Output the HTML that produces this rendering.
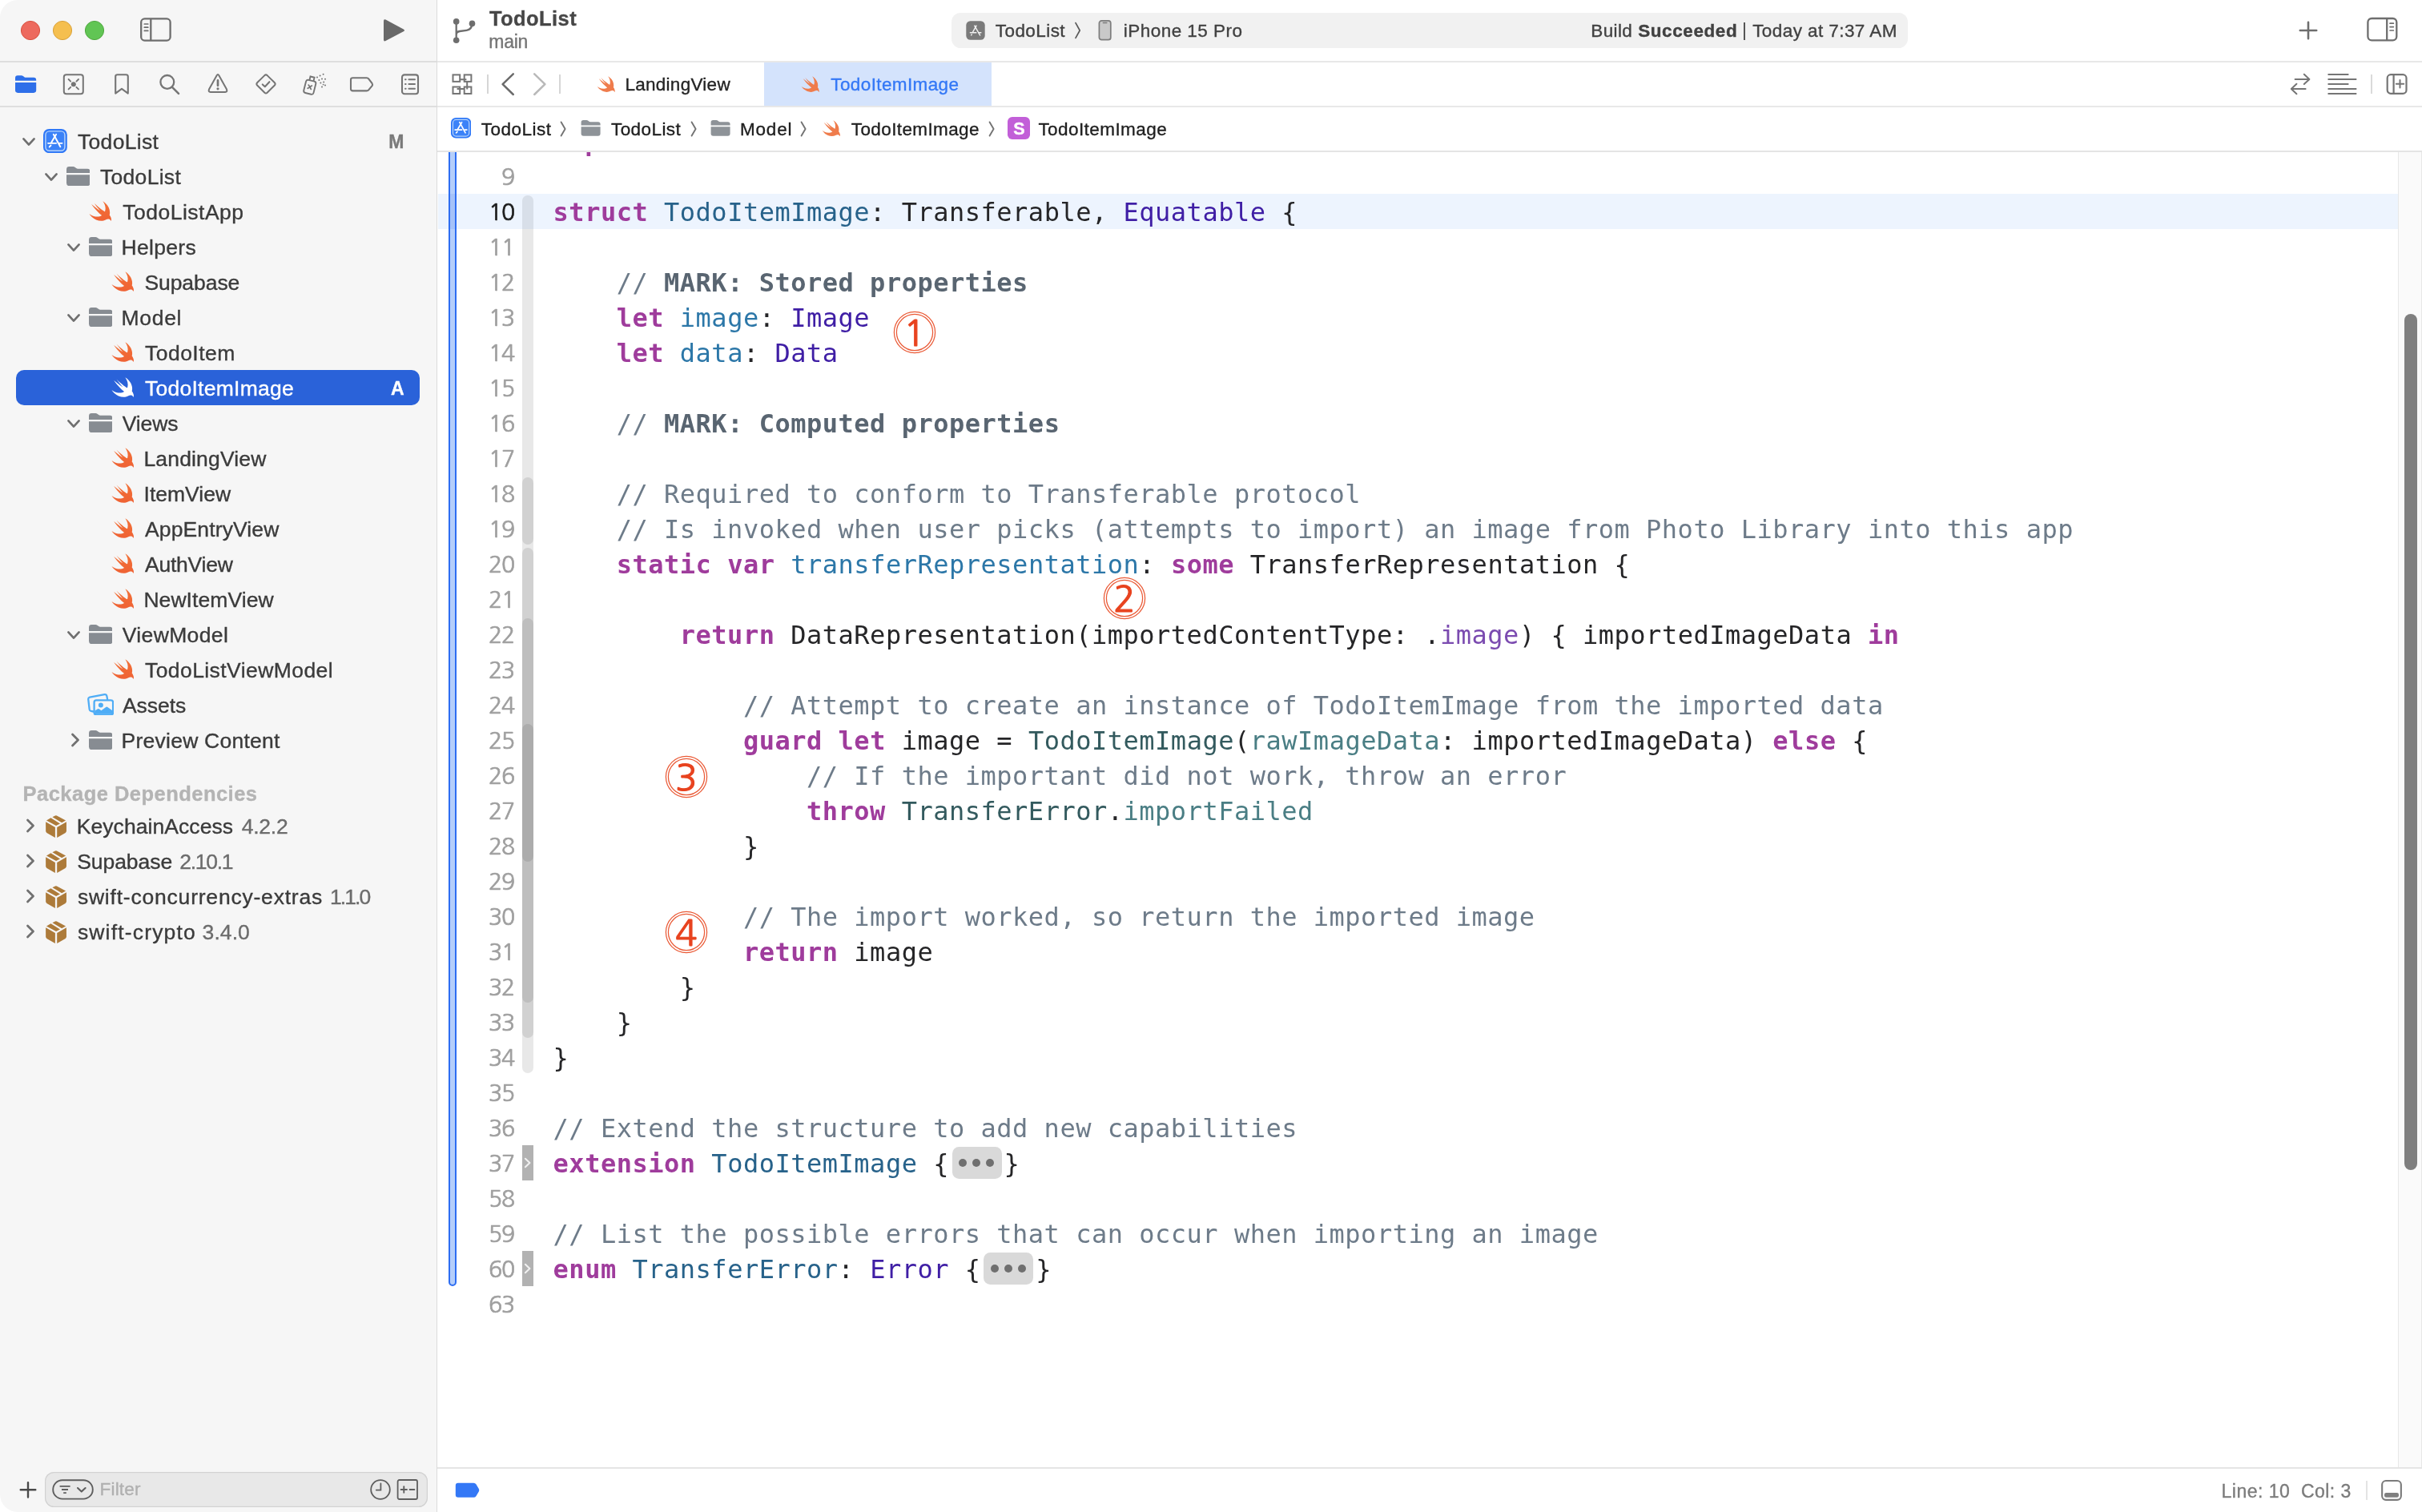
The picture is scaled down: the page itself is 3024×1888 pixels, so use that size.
<!DOCTYPE html>
<html lang="en"><head><meta charset="utf-8"><title>TodoList — TodoItemImage.swift</title>
<style>
html,body{margin:0;padding:0;background:#fff;}
body{width:3024px;height:1888px;position:relative;overflow:hidden;font-family:"Liberation Sans", sans-serif;}
.win{position:absolute;left:0;top:0;width:3024px;height:1888px;overflow:hidden;will-change:transform;}
.b{position:absolute;display:block;}
.t{position:absolute;white-space:pre;line-height:1;-webkit-text-stroke:0.35px currentColor;}

.ed{position:absolute;left:547px;top:190px;width:2477px;height:1641.8px;overflow:hidden;background:#fff;}
.ln{position:absolute;left:143.60px;margin-top:1.2px;height:44.0px;line-height:44.0px;white-space:pre;font-family:"DejaVu Sans Mono", "Liberation Mono", monospace;font-size:32px;letter-spacing:0.5094px;color:#252527;}
.ln b{font-weight:700;}
.no{position:absolute;left:0;width:94.9px;text-align:right;height:44.0px;line-height:44.0px;margin-top:1.2px;font-family:NanumGothic,"Liberation Sans", sans-serif;font-size:28.4px;letter-spacing:-1.2px;color:#9f9f9f;-webkit-text-stroke:0.7px currentColor;}
.fold{display:inline-block;vertical-align:top;position:relative;top:0.6px;width:62.2px;height:40.2px;margin:0 2.8px 0 3.6px;border-radius:8.5px;background:#d9d9d9;letter-spacing:0;}
.fold i{position:absolute;top:14.9px;width:10px;height:10px;border-radius:50%;background:#6f6f6f;}

</style></head><body><div class="win">
<div class="b" style="left:0px;top:0px;width:545.2px;height:1888px;background:#f6f6f6;border-radius:22px 0 0 22px;"></div>
<div class="b" style="left:544.9px;top:0px;width:1.3px;height:1888px;background:#dbdbdb;"></div>
<div class="b" style="left:0px;top:76.2px;width:544.9px;height:1.9px;background:#dedede;"></div>
<div class="b" style="left:0px;top:132.3px;width:544.9px;height:1.9px;background:#dedede;"></div>
<div class="b" style="left:546.1px;top:76.2px;width:2478px;height:1.9px;background:#e8e8e8;"></div>
<div class="b" style="left:546.1px;top:132.1px;width:2478px;height:1.9px;background:#e8e8e8;"></div>
<div class="b" style="left:546.1px;top:188.2px;width:2478px;height:1.9px;background:#e4e4e4;"></div>
<div class="b" style="left:546.1px;top:1832px;width:2478px;height:2px;background:#e5e5e5;"></div>
<svg class="b" style="left:25px;top:25px;" width="26" height="26" viewBox="0 0 26 26"><circle cx="13" cy="13" r="11.6" fill="#ed6a5e" stroke="#d8513f" stroke-width="1"/></svg>
<svg class="b" style="left:65px;top:25px;" width="26" height="26" viewBox="0 0 26 26"><circle cx="13" cy="13" r="11.6" fill="#f5bf4f" stroke="#d9a13a" stroke-width="1"/></svg>
<svg class="b" style="left:105px;top:25px;" width="26" height="26" viewBox="0 0 26 26"><circle cx="13" cy="13" r="11.6" fill="#61c554" stroke="#4fa73f" stroke-width="1"/></svg>
<svg class="b" style="left:173px;top:20px;" width="44" height="34" viewBox="0 0 44 34"><rect x="3.2" y="3.4" width="36.4" height="27.2" rx="4.4" fill="none" stroke="#6e6e6e" stroke-width="2.3"/><path d="M15.3 3.4 V30.6" stroke="#6e6e6e" stroke-width="2.3"/><path d="M7.3 10 H11.8 M7.3 14.2 H11.8 M7.3 18.4 H11.8" stroke="#6e6e6e" stroke-width="1.7" stroke-linecap="round"/></svg>
<svg class="b" style="left:476px;top:22px;" width="32" height="32" viewBox="0 0 32 32"><path d="M3 4.2 Q3 1.4 5.5 2.6 L27.8 14.4 Q30.2 15.85 27.8 17.3 L5.5 29.1 Q3 30.3 3 27.5 Z" fill="#696969"/></svg>
<svg class="b" style="left:19px;top:93px;" width="27" height="24" viewBox="0 0 27 24"><path fill="#2e6fe9" d="M0 4.4 Q0 1.2 3 1.2 H7.6 Q9 1.2 10.2 2.2 L11.4 3.2 Q12.2 3.8 13.4 3.8 H23 Q26.2 3.8 26.2 7 V7.8 H0 Z"/><path fill="#2e6fe9" d="M0 9.9 H26.2 V19.6 Q26.2 22.9 23 22.9 H3.2 Q0 22.9 0 19.6 Z"/></svg>
<svg class="b" style="left:77px;top:91px;" width="30" height="28" viewBox="0 0 30 28"><rect x="2.8" y="2.2" width="24" height="24" rx="3" fill="none" stroke="#757575" stroke-width="2"/><circle cx="14.8" cy="14.2" r="3" fill="#757575"/><path d="M8.6 8 L11.2 10.6 M21 8 L18.4 10.6 M8.6 20.4 L11.2 17.8 M21 20.4 L18.4 17.8" stroke="#757575" stroke-width="1.9" stroke-linecap="round"/></svg>
<svg class="b" style="left:141px;top:91px;" width="22" height="28" viewBox="0 0 22 28"><path d="M3.2 4.6 Q3.2 2.2 5.6 2.2 H16.4 Q18.8 2.2 18.8 4.6 V25.6 L11 19.8 L3.2 25.6 Z" fill="none" stroke="#757575" stroke-width="2.1" stroke-linejoin="round"/></svg>
<svg class="b" style="left:198px;top:91px;" width="28" height="28" viewBox="0 0 28 28"><circle cx="10.8" cy="11.4" r="8.4" fill="none" stroke="#757575" stroke-width="2.3"/><path d="M17 17.8 L25 25.8" stroke="#757575" stroke-width="2.6" stroke-linecap="round"/></svg>
<svg class="b" style="left:258px;top:91px;" width="28" height="27" viewBox="0 0 28 27"><path d="M12.6 3.2 Q14 1 15.4 3.2 L25 20.6 Q26.2 23.8 23.2 24 H4.8 Q1.8 23.8 3 20.6 Z" fill="none" stroke="#757575" stroke-width="2" stroke-linejoin="round"/><path d="M14 9.4 V15.8" stroke="#757575" stroke-width="2.7" stroke-linecap="round"/><circle cx="14" cy="19.8" r="1.6" fill="#757575"/></svg>
<svg class="b" style="left:316px;top:90px;" width="31" height="30" viewBox="0 0 31 30"><path d="M14.4 4.1 Q16 2.6 17.6 4.1 L26.9 13.3 Q28.4 14.9 26.9 16.5 L17.6 25.7 Q16 27.2 14.4 25.7 L5.1 16.5 Q3.6 14.9 5.1 13.3 Z" fill="none" stroke="#757575" stroke-width="2"/><path d="M11.8 15.4 L14.8 18.2 L20.4 12.2" fill="none" stroke="#757575" stroke-width="2.1" stroke-linecap="round" stroke-linejoin="round"/></svg>
<svg class="b" style="left:375px;top:89px;" width="34" height="32" viewBox="0 0 34 32"><g transform="translate(1.2 0.4) rotate(14 11 19)"><rect x="4.4" y="11.2" width="12.6" height="16.6" rx="2.6" fill="none" stroke="#757575" stroke-width="1.9"/><path d="M8.2 11 V6.4 H13.4 V11" fill="none" stroke="#757575" stroke-width="1.9"/><path d="M8.6 17.2 L12.8 21.6 M12.8 17.2 L8.6 21.6" stroke="#757575" stroke-width="1.8" stroke-linecap="round"/></g><g fill="#757575"><circle cx="21" cy="7.6" r="1"/><circle cx="24.6" cy="5.6" r="1"/><circle cx="28.6" cy="3.8" r="1"/><circle cx="23.4" cy="11" r="1"/><circle cx="27" cy="9.6" r="1"/><circle cx="31" cy="9.8" r="1"/><circle cx="25.4" cy="14.4" r="1"/><circle cx="29.2" cy="13.4" r="1"/><circle cx="27" cy="19.6" r="1"/><circle cx="31" cy="17.4" r="1"/><circle cx="28.6" cy="16.6" r="0.9"/></g></svg>
<svg class="b" style="left:435px;top:94px;" width="34" height="22" viewBox="0 0 34 22"><path d="M5.4 3.2 H22.8 Q24.4 3.2 25.2 4.4 L29.6 10.2 Q30.6 11.8 29.6 13.2 L25.2 18.4 Q24.4 19.4 22.8 19.4 H5.4 Q3 19.4 3 17 V5.6 Q3 3.2 5.4 3.2 Z" fill="none" stroke="#757575" stroke-width="2.1"/></svg>
<svg class="b" style="left:499px;top:91px;" width="26" height="28" viewBox="0 0 26 28"><rect x="3" y="2.4" width="20" height="23.8" rx="3" fill="none" stroke="#757575" stroke-width="2.1"/><path d="M11.4 8.2 H19 M11.4 14 H19 M11.4 19.8 H19" stroke="#757575" stroke-width="1.9" stroke-linecap="round"/><path d="M7 8.2 H7.7 M7 14 H7.7 M7 19.8 H7.7" stroke="#757575" stroke-width="1.9" stroke-linecap="round"/></svg>
<svg class="b" style="left:562px;top:20px;" width="36" height="36" viewBox="0 0 36 36"><circle cx="7.7" cy="6.9" r="3.8" fill="#6e6e6e"/><circle cx="7.7" cy="30.2" r="3.8" fill="#6e6e6e"/><circle cx="27.5" cy="9.4" r="3.8" fill="#6e6e6e"/><path d="M7.7 6.9 V30.2 M7.7 23.4 Q7.7 19.6 12 19 L20.6 17.8 Q27.3 16.8 27.5 9.4" fill="none" stroke="#6e6e6e" stroke-width="2.3"/></svg>
<div class="t " style="left:611.00px;top:11px;font-size:25.5px;color:#474747;font-weight:700;letter-spacing:0.421px;">TodoList</div>
<div class="t " style="left:610.30px;top:41px;font-size:23px;color:#757575;letter-spacing:-0.254px;">main</div>
<div class="b" style="left:1188px;top:15.8px;width:1193.8px;height:44.5px;background:#f1f1f1;border-radius:11.5px;"></div>
<svg class="b" style="left:1206px;top:26px;" width="24" height="24" viewBox="0 0 24 24"><rect x="0.3" y="0.3" width="23.4" height="23.4" rx="5.2" fill="#7a7a7a"/><g stroke="#f1f1f1" stroke-width="1.5" stroke-linecap="round" fill="none"><path d="M13 6.2 L8.6 14"/><path d="M10.8 6.2 L17.6 18"/><path d="M5.4 14.8 H12.8"/><path d="M15.8 14.8 H18.8"/><path d="M7.2 17 L6.7 17.9"/></g></svg>
<div class="t " style="left:1242.80px;top:28px;font-size:22.5px;color:#414141;letter-spacing:0.421px;">TodoList</div>
<svg class="b" style="left:1340px;top:27px;" width="12" height="22" viewBox="0 0 12 22"><path d="M3 1.6 L8.2 11 L3 20.4" fill="none" stroke="#5a5a5a" stroke-width="1.7" stroke-linecap="round" stroke-linejoin="round"/></svg>
<svg class="b" style="left:1370px;top:24px;" width="20" height="28" viewBox="0 0 20 28"><rect x="2.4" y="1.9" width="14.4" height="23.8" rx="3" fill="#c9c9c9" stroke="#7d7d7d" stroke-width="1.7"/><path d="M7.4 4.6 H11.8" stroke="#7d7d7d" stroke-width="1.5" stroke-linecap="round"/></svg>
<div class="t " style="left:1402.80px;top:28px;font-size:22.5px;color:#414141;letter-spacing:0.459px;">iPhone 15 Pro</div>
<div class="t " style="left:1986.30px;top:28px;font-size:22.5px;color:#414141;letter-spacing:0.370px;">Build</div>
<div class="t " style="left:2045.20px;top:28px;font-size:22.5px;color:#414141;font-weight:700;letter-spacing:0.580px;">Succeeded</div>
<div class="b" style="left:2176.8px;top:27.5px;width:1.8px;height:22px;background:#555;"></div>
<div class="t " style="left:2188.20px;top:28px;font-size:22.5px;color:#414141;letter-spacing:0.423px;">Today at 7:37 AM</div>
<svg class="b" style="left:2869px;top:24.8px;" width="26" height="26" viewBox="0 0 26 26"><path d="M13 2.8 V23.2 M2.8 13 H23.2" stroke="#6e6e6e" stroke-width="2.6" stroke-linecap="round"/></svg>
<svg class="b" style="left:2952.8px;top:20.2px;" width="44" height="34" viewBox="0 0 44 34"><rect x="3.4" y="3" width="35.9" height="27.4" rx="4.8" fill="none" stroke="#6e6e6e" stroke-width="2.3"/><path d="M27.2 3 V30.4" stroke="#6e6e6e" stroke-width="2.3"/><path d="M31 9.2 H35.4 M31 13.6 H35.4 M31 18 H35.4" stroke="#6e6e6e" stroke-width="1.7" stroke-linecap="round"/></svg>
<svg class="b" style="left:562px;top:90px;" width="30" height="30" viewBox="0 0 30 30"><g fill="none" stroke="#757575" stroke-width="2"><rect x="3.5" y="3.4" width="8.7" height="8.5"/><rect x="17.7" y="3.4" width="8.7" height="8.5"/><rect x="3.5" y="18.5" width="8.7" height="8.5"/><rect x="17.7" y="18.5" width="8.7" height="8.5"/><path d="M12.2 9.2 H20.4 M21.2 11.9 V21.4 M17.7 21 H8.6"/></g></svg>
<div class="b" style="left:608.4px;top:93px;width:1.6px;height:24px;background:#d6d6d6;"></div>
<div class="b" style="left:698px;top:93px;width:1.6px;height:24px;background:#d6d6d6;"></div>
<svg class="b" style="left:622px;top:89px;" width="24" height="32" viewBox="0 0 24 32"><path d="M18.8 3.4 L5.6 16.2 L18.8 29" fill="none" stroke="#6b6b6b" stroke-width="2.5" stroke-linecap="round" stroke-linejoin="round"/></svg>
<svg class="b" style="left:662px;top:89px;" width="24" height="32" viewBox="0 0 24 32"><path d="M5.2 3.4 L18.4 16.2 L5.2 29" fill="none" stroke="#b9b9b9" stroke-width="2.5" stroke-linecap="round" stroke-linejoin="round"/></svg>
<svg class="b" style="left:745.2px;top:95.2px;overflow:visible;" width="24.2" height="20.8" viewBox="2.3 3.3 19.1 17"><path fill="#ef7c4c" d="M13.543 3.41c4.114 2.47 6.545 7.162 5.549 11.131-.024.093-.05.181-.076.272l.002.001c2.062 2.538 1.5 5.258 1.236 4.745-1.072-2.086-3.066-1.568-4.088-1.043a6.803 6.803 0 0 1-.281.158l-.02.012-.002.002c-2.115 1.123-4.957 1.205-7.812-.022a12.568 12.568 0 0 1-5.64-4.838c.649.48 1.35.902 2.097 1.252 3.019 1.414 6.051 1.311 8.197-.002C9.651 12.73 7.101 9.67 5.146 7.191a10.628 10.628 0 0 1-1.005-1.384c2.34 2.142 6.038 4.83 7.365 5.576C8.69 8.408 6.208 4.743 6.324 4.86c4.436 4.47 8.528 6.996 8.528 6.996.154.085.27.154.36.213.085-.215.16-.437.224-.668.708-2.588-.09-5.548-1.893-7.992z"/></svg>
<div class="t " style="left:780.40px;top:95px;font-size:22.5px;color:#242424;letter-spacing:0.281px;">LandingView</div>
<div class="b" style="left:954px;top:78.1px;width:284px;height:54px;background:#d4e3fc;"></div>
<svg class="b" style="left:1000.2px;top:95.2px;overflow:visible;" width="24.2" height="20.8" viewBox="2.3 3.3 19.1 17"><path fill="#ef7c4c" d="M13.543 3.41c4.114 2.47 6.545 7.162 5.549 11.131-.024.093-.05.181-.076.272l.002.001c2.062 2.538 1.5 5.258 1.236 4.745-1.072-2.086-3.066-1.568-4.088-1.043a6.803 6.803 0 0 1-.281.158l-.02.012-.002.002c-2.115 1.123-4.957 1.205-7.812-.022a12.568 12.568 0 0 1-5.64-4.838c.649.48 1.35.902 2.097 1.252 3.019 1.414 6.051 1.311 8.197-.002C9.651 12.73 7.101 9.67 5.146 7.191a10.628 10.628 0 0 1-1.005-1.384c2.34 2.142 6.038 4.83 7.365 5.576C8.69 8.408 6.208 4.743 6.324 4.86c4.436 4.47 8.528 6.996 8.528 6.996.154.085.27.154.36.213.085-.215.16-.437.224-.668.708-2.588-.09-5.548-1.893-7.992z"/></svg>
<div class="t " style="left:1037.30px;top:95px;font-size:22.5px;color:#3478f6;letter-spacing:0.386px;">TodoItemImage</div>
<svg class="b" style="left:2857px;top:90px;" width="30" height="30" viewBox="0 0 30 30"><g fill="none" stroke="#757575" stroke-width="2" stroke-linecap="round" stroke-linejoin="round"><path d="M8.6 8.9 H26 M19.8 2.8 L26.4 8.9 L19.8 15"/><path d="M21.6 21 H4 M10.4 14.8 L3.8 21 L10.4 27.2"/></g></svg>
<svg class="b" style="left:2905.5px;top:91px;" width="38" height="28" viewBox="0 0 38 28"><path d="M0.5 1.9 H26.4 M0.5 7.9 H36.3 M0.5 13.9 H26.4 M0.5 20 H36.3 M0.5 26 H36.3" stroke="#757575" stroke-width="2"/></svg>
<div class="b" style="left:2960px;top:93px;width:1.6px;height:24px;background:#dadada;"></div>
<svg class="b" style="left:2977.4px;top:90px;" width="32" height="30" viewBox="0 0 32 30"><rect x="3.7" y="3.2" width="23.8" height="23.6" rx="4.3" fill="none" stroke="#757575" stroke-width="2.2"/><path d="M11.6 3.2 V26.8" stroke="#757575" stroke-width="2.2"/><path d="M14.8 14.8 H24.2 M19.5 10.1 V19.5" stroke="#757575" stroke-width="2" stroke-linecap="round"/></svg>
<svg class="b" style="left:563px;top:147.2px;" width="25.2" height="25.535999999999998" viewBox="0 0 30 30.4"><rect x="0" y="0" width="30" height="30.4" rx="7.3" fill="#2f78f7"/><rect x="2.9" y="2.9" width="24.2" height="24.6" rx="4.8" fill="#3b82f8" stroke="#b5d3fb" stroke-width="1.5"/><g stroke="#ffffff" stroke-width="2" stroke-linecap="round" fill="none"><path d="M16.2 6.8 L10.3 16.9"/><path d="M12.9 6.8 L21.5 22.4"/><path d="M6.1 18 H16.2"/><path d="M20.3 18 H23.7"/><path d="M9.5 20.7 L7.8 22.6"/></g></svg>
<div class="t " style="left:600.70px;top:151px;font-size:22.5px;color:#1f1f1f;letter-spacing:0.493px;">TodoList</div>
<svg class="b" style="left:697.8px;top:151px;" width="12" height="20" viewBox="0 0 12 20"><path d="M2.6 1.4 L7.6 10 L2.6 18.6" fill="none" stroke="#737373" stroke-width="1.9" stroke-linecap="round" stroke-linejoin="round"/></svg>
<svg class="b" style="left:725.3px;top:150.2px;" width="25.2" height="19.7" viewBox="0 0 29.5 24.2"><path fill="#8e9398" d="M0 3.4 Q0 0 3.4 0 H8.2 Q9.6 0 10.8 1 L12.2 2.1 Q13 2.7 14.2 2.7 H26 Q29.5 2.7 29.5 6.2 V8 H0 Z"/><path fill="#8e9398" d="M0 10.2 H29.5 V20.6 Q29.5 24.2 25.9 24.2 H3.6 Q0 24.2 0 20.6 Z"/></svg>
<div class="t " style="left:763.00px;top:151px;font-size:22.5px;color:#1f1f1f;letter-spacing:0.421px;">TodoList</div>
<svg class="b" style="left:861px;top:151px;" width="12" height="20" viewBox="0 0 12 20"><path d="M2.6 1.4 L7.6 10 L2.6 18.6" fill="none" stroke="#737373" stroke-width="1.9" stroke-linecap="round" stroke-linejoin="round"/></svg>
<svg class="b" style="left:886.9px;top:150.2px;" width="25.2" height="19.7" viewBox="0 0 29.5 24.2"><path fill="#8e9398" d="M0 3.4 Q0 0 3.4 0 H8.2 Q9.6 0 10.8 1 L12.2 2.1 Q13 2.7 14.2 2.7 H26 Q29.5 2.7 29.5 6.2 V8 H0 Z"/><path fill="#8e9398" d="M0 10.2 H29.5 V20.6 Q29.5 24.2 25.9 24.2 H3.6 Q0 24.2 0 20.6 Z"/></svg>
<div class="t " style="left:923.90px;top:151px;font-size:22.5px;color:#1f1f1f;letter-spacing:0.854px;">Model</div>
<svg class="b" style="left:998px;top:151px;" width="12" height="20" viewBox="0 0 12 20"><path d="M2.6 1.4 L7.6 10 L2.6 18.6" fill="none" stroke="#737373" stroke-width="1.9" stroke-linecap="round" stroke-linejoin="round"/></svg>
<svg class="b" style="left:1025.6px;top:150.2px;overflow:visible;" width="24.6" height="21" viewBox="2.3 3.3 19.1 17"><path fill="#ef7c4c" d="M13.543 3.41c4.114 2.47 6.545 7.162 5.549 11.131-.024.093-.05.181-.076.272l.002.001c2.062 2.538 1.5 5.258 1.236 4.745-1.072-2.086-3.066-1.568-4.088-1.043a6.803 6.803 0 0 1-.281.158l-.02.012-.002.002c-2.115 1.123-4.957 1.205-7.812-.022a12.568 12.568 0 0 1-5.64-4.838c.649.48 1.35.902 2.097 1.252 3.019 1.414 6.051 1.311 8.197-.002C9.651 12.73 7.101 9.67 5.146 7.191a10.628 10.628 0 0 1-1.005-1.384c2.34 2.142 6.038 4.83 7.365 5.576C8.69 8.408 6.208 4.743 6.324 4.86c4.436 4.47 8.528 6.996 8.528 6.996.154.085.27.154.36.213.085-.215.16-.437.224-.668.708-2.588-.09-5.548-1.893-7.992z"/></svg>
<div class="t " style="left:1062.80px;top:151px;font-size:22.5px;color:#1f1f1f;letter-spacing:0.386px;">TodoItemImage</div>
<svg class="b" style="left:1232.5px;top:151px;" width="12" height="20" viewBox="0 0 12 20"><path d="M2.6 1.4 L7.6 10 L2.6 18.6" fill="none" stroke="#737373" stroke-width="1.9" stroke-linecap="round" stroke-linejoin="round"/></svg>
<div class="b" style="left:1258px;top:145.8px;width:27.7px;height:28px;background:#c25fd8;border-radius:5.8px;"></div>
<div class="t " style="left:1265.20px;top:151px;font-size:21.5px;color:#ffffff;font-weight:700;">S</div>
<div class="t " style="left:1296.40px;top:151px;font-size:22.5px;color:#1f1f1f;letter-spacing:0.436px;">TodoItemImage</div>
<div class="b" style="left:20px;top:462.3px;width:504px;height:43.6px;background:#2a62d9;border-radius:10px;"></div>
<svg class="b" style="left:24.0px;top:166.8px;" width="24" height="20" viewBox="-12 -10 24 20"><path d="M-6.6 -3.6 L0 3.6 L6.6 -3.6" fill="none" stroke="#6f6f6f" stroke-width="2.7" stroke-linecap="round" stroke-linejoin="round"/></svg>
<svg class="b" style="left:54.25px;top:160.9px;" width="29.8" height="30.197333333333333" viewBox="0 0 30 30.4"><rect x="0" y="0" width="30" height="30.4" rx="7.3" fill="#2f78f7"/><rect x="2.9" y="2.9" width="24.2" height="24.6" rx="4.8" fill="#3b82f8" stroke="#b5d3fb" stroke-width="1.5"/><g stroke="#ffffff" stroke-width="2" stroke-linecap="round" fill="none"><path d="M16.2 6.8 L10.3 16.9"/><path d="M12.9 6.8 L21.5 22.4"/><path d="M6.1 18 H16.2"/><path d="M20.3 18 H23.7"/><path d="M9.5 20.7 L7.8 22.6"/></g></svg>
<div class="t " style="left:96.90px;top:164px;font-size:26.5px;color:#3b3b3b;letter-spacing:0.337px;">TodoList</div>
<svg class="b" style="left:52.0px;top:210.8px;" width="24" height="20" viewBox="-12 -10 24 20"><path d="M-6.6 -3.6 L0 3.6 L6.6 -3.6" fill="none" stroke="#6f6f6f" stroke-width="2.7" stroke-linecap="round" stroke-linejoin="round"/></svg>
<svg class="b" style="left:82.7px;top:207.9px;" width="29.5" height="24.2" viewBox="0 0 29.5 24.2"><path fill="#878c92" d="M0 3.4 Q0 0 3.4 0 H8.2 Q9.6 0 10.8 1 L12.2 2.1 Q13 2.7 14.2 2.7 H26 Q29.5 2.7 29.5 6.2 V8 H0 Z"/><path fill="#878c92" d="M0 10.2 H29.5 V20.6 Q29.5 24.2 25.9 24.2 H3.6 Q0 24.2 0 20.6 Z"/></svg>
<div class="t " style="left:125.00px;top:208px;font-size:26.5px;color:#3b3b3b;letter-spacing:0.294px;">TodoList</div>
<svg class="b" style="left:110.8px;top:250.7px;overflow:visible;" width="29.6" height="25.9" viewBox="2.3 3.3 19.1 17"><defs><linearGradient id="sg110_250" x1="0" y1="0" x2="0" y2="1"><stop offset="0" stop-color="#f27238"/><stop offset="1" stop-color="#ef6234"/></linearGradient></defs><path fill="url(#sg110_250)" d="M13.543 3.41c4.114 2.47 6.545 7.162 5.549 11.131-.024.093-.05.181-.076.272l.002.001c2.062 2.538 1.5 5.258 1.236 4.745-1.072-2.086-3.066-1.568-4.088-1.043a6.803 6.803 0 0 1-.281.158l-.02.012-.002.002c-2.115 1.123-4.957 1.205-7.812-.022a12.568 12.568 0 0 1-5.64-4.838c.649.48 1.35.902 2.097 1.252 3.019 1.414 6.051 1.311 8.197-.002C9.651 12.73 7.101 9.67 5.146 7.191a10.628 10.628 0 0 1-1.005-1.384c2.34 2.142 6.038 4.83 7.365 5.576C8.69 8.408 6.208 4.743 6.324 4.86c4.436 4.47 8.528 6.996 8.528 6.996.154.085.27.154.36.213.085-.215.16-.437.224-.668.708-2.588-.09-5.548-1.893-7.992z"/></svg>
<div class="t " style="left:153.30px;top:252px;font-size:26.5px;color:#3b3b3b;letter-spacing:0.488px;">TodoListApp</div>
<svg class="b" style="left:80.0px;top:298.8px;" width="24" height="20" viewBox="-12 -10 24 20"><path d="M-6.6 -3.6 L0 3.6 L6.6 -3.6" fill="none" stroke="#6f6f6f" stroke-width="2.7" stroke-linecap="round" stroke-linejoin="round"/></svg>
<svg class="b" style="left:110.7px;top:295.9px;" width="29.5" height="24.2" viewBox="0 0 29.5 24.2"><path fill="#878c92" d="M0 3.4 Q0 0 3.4 0 H8.2 Q9.6 0 10.8 1 L12.2 2.1 Q13 2.7 14.2 2.7 H26 Q29.5 2.7 29.5 6.2 V8 H0 Z"/><path fill="#878c92" d="M0 10.2 H29.5 V20.6 Q29.5 24.2 25.9 24.2 H3.6 Q0 24.2 0 20.6 Z"/></svg>
<div class="t " style="left:151.60px;top:296px;font-size:26.5px;color:#3b3b3b;letter-spacing:0.289px;">Helpers</div>
<svg class="b" style="left:138.8px;top:338.7px;overflow:visible;" width="29.6" height="25.9" viewBox="2.3 3.3 19.1 17"><defs><linearGradient id="sg138_338" x1="0" y1="0" x2="0" y2="1"><stop offset="0" stop-color="#f27238"/><stop offset="1" stop-color="#ef6234"/></linearGradient></defs><path fill="url(#sg138_338)" d="M13.543 3.41c4.114 2.47 6.545 7.162 5.549 11.131-.024.093-.05.181-.076.272l.002.001c2.062 2.538 1.5 5.258 1.236 4.745-1.072-2.086-3.066-1.568-4.088-1.043a6.803 6.803 0 0 1-.281.158l-.02.012-.002.002c-2.115 1.123-4.957 1.205-7.812-.022a12.568 12.568 0 0 1-5.64-4.838c.649.48 1.35.902 2.097 1.252 3.019 1.414 6.051 1.311 8.197-.002C9.651 12.73 7.101 9.67 5.146 7.191a10.628 10.628 0 0 1-1.005-1.384c2.34 2.142 6.038 4.83 7.365 5.576C8.69 8.408 6.208 4.743 6.324 4.86c4.436 4.47 8.528 6.996 8.528 6.996.154.085.27.154.36.213.085-.215.16-.437.224-.668.708-2.588-.09-5.548-1.893-7.992z"/></svg>
<div class="t " style="left:180.40px;top:340px;font-size:26.5px;color:#3b3b3b;letter-spacing:-0.059px;">Supabase</div>
<svg class="b" style="left:80.0px;top:386.8px;" width="24" height="20" viewBox="-12 -10 24 20"><path d="M-6.6 -3.6 L0 3.6 L6.6 -3.6" fill="none" stroke="#6f6f6f" stroke-width="2.7" stroke-linecap="round" stroke-linejoin="round"/></svg>
<svg class="b" style="left:110.7px;top:383.9px;" width="29.5" height="24.2" viewBox="0 0 29.5 24.2"><path fill="#878c92" d="M0 3.4 Q0 0 3.4 0 H8.2 Q9.6 0 10.8 1 L12.2 2.1 Q13 2.7 14.2 2.7 H26 Q29.5 2.7 29.5 6.2 V8 H0 Z"/><path fill="#878c92" d="M0 10.2 H29.5 V20.6 Q29.5 24.2 25.9 24.2 H3.6 Q0 24.2 0 20.6 Z"/></svg>
<div class="t " style="left:151.60px;top:384px;font-size:26.5px;color:#3b3b3b;letter-spacing:0.678px;">Model</div>
<svg class="b" style="left:138.8px;top:426.7px;overflow:visible;" width="29.6" height="25.9" viewBox="2.3 3.3 19.1 17"><defs><linearGradient id="sg138_426" x1="0" y1="0" x2="0" y2="1"><stop offset="0" stop-color="#f27238"/><stop offset="1" stop-color="#ef6234"/></linearGradient></defs><path fill="url(#sg138_426)" d="M13.543 3.41c4.114 2.47 6.545 7.162 5.549 11.131-.024.093-.05.181-.076.272l.002.001c2.062 2.538 1.5 5.258 1.236 4.745-1.072-2.086-3.066-1.568-4.088-1.043a6.803 6.803 0 0 1-.281.158l-.02.012-.002.002c-2.115 1.123-4.957 1.205-7.812-.022a12.568 12.568 0 0 1-5.64-4.838c.649.48 1.35.902 2.097 1.252 3.019 1.414 6.051 1.311 8.197-.002C9.651 12.73 7.101 9.67 5.146 7.191a10.628 10.628 0 0 1-1.005-1.384c2.34 2.142 6.038 4.83 7.365 5.576C8.69 8.408 6.208 4.743 6.324 4.86c4.436 4.47 8.528 6.996 8.528 6.996.154.085.27.154.36.213.085-.215.16-.437.224-.668.708-2.588-.09-5.548-1.893-7.992z"/></svg>
<div class="t " style="left:181.00px;top:428px;font-size:26.5px;color:#3b3b3b;letter-spacing:0.468px;">TodoItem</div>
<svg class="b" style="left:138.8px;top:470.7px;overflow:visible;" width="29.6" height="25.9" viewBox="2.3 3.3 19.1 17"><path fill="#ffffff" d="M13.543 3.41c4.114 2.47 6.545 7.162 5.549 11.131-.024.093-.05.181-.076.272l.002.001c2.062 2.538 1.5 5.258 1.236 4.745-1.072-2.086-3.066-1.568-4.088-1.043a6.803 6.803 0 0 1-.281.158l-.02.012-.002.002c-2.115 1.123-4.957 1.205-7.812-.022a12.568 12.568 0 0 1-5.64-4.838c.649.48 1.35.902 2.097 1.252 3.019 1.414 6.051 1.311 8.197-.002C9.651 12.73 7.101 9.67 5.146 7.191a10.628 10.628 0 0 1-1.005-1.384c2.34 2.142 6.038 4.83 7.365 5.576C8.69 8.408 6.208 4.743 6.324 4.86c4.436 4.47 8.528 6.996 8.528 6.996.154.085.27.154.36.213.085-.215.16-.437.224-.668.708-2.588-.09-5.548-1.893-7.992z"/></svg>
<div class="t " style="left:181.00px;top:472px;font-size:26.5px;color:#ffffff;letter-spacing:0.257px;">TodoItemImage</div>
<svg class="b" style="left:80.0px;top:518.8px;" width="24" height="20" viewBox="-12 -10 24 20"><path d="M-6.6 -3.6 L0 3.6 L6.6 -3.6" fill="none" stroke="#6f6f6f" stroke-width="2.7" stroke-linecap="round" stroke-linejoin="round"/></svg>
<svg class="b" style="left:110.7px;top:515.9px;" width="29.5" height="24.2" viewBox="0 0 29.5 24.2"><path fill="#878c92" d="M0 3.4 Q0 0 3.4 0 H8.2 Q9.6 0 10.8 1 L12.2 2.1 Q13 2.7 14.2 2.7 H26 Q29.5 2.7 29.5 6.2 V8 H0 Z"/><path fill="#878c92" d="M0 10.2 H29.5 V20.6 Q29.5 24.2 25.9 24.2 H3.6 Q0 24.2 0 20.6 Z"/></svg>
<div class="t " style="left:152.80px;top:516px;font-size:26.5px;color:#3b3b3b;letter-spacing:-0.140px;">Views</div>
<svg class="b" style="left:138.8px;top:558.7px;overflow:visible;" width="29.6" height="25.9" viewBox="2.3 3.3 19.1 17"><defs><linearGradient id="sg138_558" x1="0" y1="0" x2="0" y2="1"><stop offset="0" stop-color="#f27238"/><stop offset="1" stop-color="#ef6234"/></linearGradient></defs><path fill="url(#sg138_558)" d="M13.543 3.41c4.114 2.47 6.545 7.162 5.549 11.131-.024.093-.05.181-.076.272l.002.001c2.062 2.538 1.5 5.258 1.236 4.745-1.072-2.086-3.066-1.568-4.088-1.043a6.803 6.803 0 0 1-.281.158l-.02.012-.002.002c-2.115 1.123-4.957 1.205-7.812-.022a12.568 12.568 0 0 1-5.64-4.838c.649.48 1.35.902 2.097 1.252 3.019 1.414 6.051 1.311 8.197-.002C9.651 12.73 7.101 9.67 5.146 7.191a10.628 10.628 0 0 1-1.005-1.384c2.34 2.142 6.038 4.83 7.365 5.576C8.69 8.408 6.208 4.743 6.324 4.86c4.436 4.47 8.528 6.996 8.528 6.996.154.085.27.154.36.213.085-.215.16-.437.224-.668.708-2.588-.09-5.548-1.893-7.992z"/></svg>
<div class="t " style="left:179.40px;top:560px;font-size:26.5px;color:#3b3b3b;letter-spacing:0.176px;">LandingView</div>
<svg class="b" style="left:138.8px;top:602.7px;overflow:visible;" width="29.6" height="25.9" viewBox="2.3 3.3 19.1 17"><defs><linearGradient id="sg138_602" x1="0" y1="0" x2="0" y2="1"><stop offset="0" stop-color="#f27238"/><stop offset="1" stop-color="#ef6234"/></linearGradient></defs><path fill="url(#sg138_602)" d="M13.543 3.41c4.114 2.47 6.545 7.162 5.549 11.131-.024.093-.05.181-.076.272l.002.001c2.062 2.538 1.5 5.258 1.236 4.745-1.072-2.086-3.066-1.568-4.088-1.043a6.803 6.803 0 0 1-.281.158l-.02.012-.002.002c-2.115 1.123-4.957 1.205-7.812-.022a12.568 12.568 0 0 1-5.64-4.838c.649.48 1.35.902 2.097 1.252 3.019 1.414 6.051 1.311 8.197-.002C9.651 12.73 7.101 9.67 5.146 7.191a10.628 10.628 0 0 1-1.005-1.384c2.34 2.142 6.038 4.83 7.365 5.576C8.69 8.408 6.208 4.743 6.324 4.86c4.436 4.47 8.528 6.996 8.528 6.996.154.085.27.154.36.213.085-.215.16-.437.224-.668.708-2.588-.09-5.548-1.893-7.992z"/></svg>
<div class="t " style="left:179.60px;top:604px;font-size:26.5px;color:#3b3b3b;letter-spacing:-0.009px;">ItemView</div>
<svg class="b" style="left:138.8px;top:646.7px;overflow:visible;" width="29.6" height="25.9" viewBox="2.3 3.3 19.1 17"><defs><linearGradient id="sg138_646" x1="0" y1="0" x2="0" y2="1"><stop offset="0" stop-color="#f27238"/><stop offset="1" stop-color="#ef6234"/></linearGradient></defs><path fill="url(#sg138_646)" d="M13.543 3.41c4.114 2.47 6.545 7.162 5.549 11.131-.024.093-.05.181-.076.272l.002.001c2.062 2.538 1.5 5.258 1.236 4.745-1.072-2.086-3.066-1.568-4.088-1.043a6.803 6.803 0 0 1-.281.158l-.02.012-.002.002c-2.115 1.123-4.957 1.205-7.812-.022a12.568 12.568 0 0 1-5.64-4.838c.649.48 1.35.902 2.097 1.252 3.019 1.414 6.051 1.311 8.197-.002C9.651 12.73 7.101 9.67 5.146 7.191a10.628 10.628 0 0 1-1.005-1.384c2.34 2.142 6.038 4.83 7.365 5.576C8.69 8.408 6.208 4.743 6.324 4.86c4.436 4.47 8.528 6.996 8.528 6.996.154.085.27.154.36.213.085-.215.16-.437.224-.668.708-2.588-.09-5.548-1.893-7.992z"/></svg>
<div class="t " style="left:181.00px;top:648px;font-size:26.5px;color:#3b3b3b;letter-spacing:0.125px;">AppEntryView</div>
<svg class="b" style="left:138.8px;top:690.7px;overflow:visible;" width="29.6" height="25.9" viewBox="2.3 3.3 19.1 17"><defs><linearGradient id="sg138_690" x1="0" y1="0" x2="0" y2="1"><stop offset="0" stop-color="#f27238"/><stop offset="1" stop-color="#ef6234"/></linearGradient></defs><path fill="url(#sg138_690)" d="M13.543 3.41c4.114 2.47 6.545 7.162 5.549 11.131-.024.093-.05.181-.076.272l.002.001c2.062 2.538 1.5 5.258 1.236 4.745-1.072-2.086-3.066-1.568-4.088-1.043a6.803 6.803 0 0 1-.281.158l-.02.012-.002.002c-2.115 1.123-4.957 1.205-7.812-.022a12.568 12.568 0 0 1-5.64-4.838c.649.48 1.35.902 2.097 1.252 3.019 1.414 6.051 1.311 8.197-.002C9.651 12.73 7.101 9.67 5.146 7.191a10.628 10.628 0 0 1-1.005-1.384c2.34 2.142 6.038 4.83 7.365 5.576C8.69 8.408 6.208 4.743 6.324 4.86c4.436 4.47 8.528 6.996 8.528 6.996.154.085.27.154.36.213.085-.215.16-.437.224-.668.708-2.588-.09-5.548-1.893-7.992z"/></svg>
<div class="t " style="left:181.00px;top:692px;font-size:26.5px;color:#3b3b3b;letter-spacing:-0.234px;">AuthView</div>
<svg class="b" style="left:138.8px;top:734.7px;overflow:visible;" width="29.6" height="25.9" viewBox="2.3 3.3 19.1 17"><defs><linearGradient id="sg138_734" x1="0" y1="0" x2="0" y2="1"><stop offset="0" stop-color="#f27238"/><stop offset="1" stop-color="#ef6234"/></linearGradient></defs><path fill="url(#sg138_734)" d="M13.543 3.41c4.114 2.47 6.545 7.162 5.549 11.131-.024.093-.05.181-.076.272l.002.001c2.062 2.538 1.5 5.258 1.236 4.745-1.072-2.086-3.066-1.568-4.088-1.043a6.803 6.803 0 0 1-.281.158l-.02.012-.002.002c-2.115 1.123-4.957 1.205-7.812-.022a12.568 12.568 0 0 1-5.64-4.838c.649.48 1.35.902 2.097 1.252 3.019 1.414 6.051 1.311 8.197-.002C9.651 12.73 7.101 9.67 5.146 7.191a10.628 10.628 0 0 1-1.005-1.384c2.34 2.142 6.038 4.83 7.365 5.576C8.69 8.408 6.208 4.743 6.324 4.86c4.436 4.47 8.528 6.996 8.528 6.996.154.085.27.154.36.213.085-.215.16-.437.224-.668.708-2.588-.09-5.548-1.893-7.992z"/></svg>
<div class="t " style="left:179.40px;top:736px;font-size:26.5px;color:#3b3b3b;letter-spacing:0.073px;">NewItemView</div>
<svg class="b" style="left:80.0px;top:782.8px;" width="24" height="20" viewBox="-12 -10 24 20"><path d="M-6.6 -3.6 L0 3.6 L6.6 -3.6" fill="none" stroke="#6f6f6f" stroke-width="2.7" stroke-linecap="round" stroke-linejoin="round"/></svg>
<svg class="b" style="left:110.7px;top:779.9px;" width="29.5" height="24.2" viewBox="0 0 29.5 24.2"><path fill="#878c92" d="M0 3.4 Q0 0 3.4 0 H8.2 Q9.6 0 10.8 1 L12.2 2.1 Q13 2.7 14.2 2.7 H26 Q29.5 2.7 29.5 6.2 V8 H0 Z"/><path fill="#878c92" d="M0 10.2 H29.5 V20.6 Q29.5 24.2 25.9 24.2 H3.6 Q0 24.2 0 20.6 Z"/></svg>
<div class="t " style="left:152.80px;top:780px;font-size:26.5px;color:#3b3b3b;letter-spacing:0.356px;">ViewModel</div>
<svg class="b" style="left:138.8px;top:822.7px;overflow:visible;" width="29.6" height="25.9" viewBox="2.3 3.3 19.1 17"><defs><linearGradient id="sg138_822" x1="0" y1="0" x2="0" y2="1"><stop offset="0" stop-color="#f27238"/><stop offset="1" stop-color="#ef6234"/></linearGradient></defs><path fill="url(#sg138_822)" d="M13.543 3.41c4.114 2.47 6.545 7.162 5.549 11.131-.024.093-.05.181-.076.272l.002.001c2.062 2.538 1.5 5.258 1.236 4.745-1.072-2.086-3.066-1.568-4.088-1.043a6.803 6.803 0 0 1-.281.158l-.02.012-.002.002c-2.115 1.123-4.957 1.205-7.812-.022a12.568 12.568 0 0 1-5.64-4.838c.649.48 1.35.902 2.097 1.252 3.019 1.414 6.051 1.311 8.197-.002C9.651 12.73 7.101 9.67 5.146 7.191a10.628 10.628 0 0 1-1.005-1.384c2.34 2.142 6.038 4.83 7.365 5.576C8.69 8.408 6.208 4.743 6.324 4.86c4.436 4.47 8.528 6.996 8.528 6.996.154.085.27.154.36.213.085-.215.16-.437.224-.668.708-2.588-.09-5.548-1.893-7.992z"/></svg>
<div class="t " style="left:181.00px;top:824px;font-size:26.5px;color:#3b3b3b;letter-spacing:0.422px;">TodoListViewModel</div>
<svg class="b" style="left:109.1px;top:865.6px;" width="33.3" height="27.5" viewBox="0 0 33.3 27.5"><path fill="none" stroke="#4fadf6" stroke-width="2.3" stroke-linecap="round" d="M7.4 22.5 L4.7 22 Q3.0 21.6 2.7 19.9 L1.25 7.3 Q1.0 5.0 3.0 4.5 L21.5 1.2 Q23.9 0.9 24.4 3.2 L25.1 7.1"/><rect x="8.6" y="8.45" width="23.5" height="17.9" rx="2.6" fill="#f6f6f6" stroke="#4fadf6" stroke-width="2.3"/><path fill="#4fadf6" d="M9.4 21.6 L13.0 19.3 Q14.06 18.6 15.1 19.4 L17.4 21.2 L23.2 17.0 Q24.3 16.2 25.4 17.0 L31.3 21.3 V25.6 H9.4 Z"/><circle cx="16.87" cy="14.46" r="3.0" fill="#4fadf6"/></svg>
<div class="t " style="left:153.00px;top:868px;font-size:26.5px;color:#3b3b3b;letter-spacing:-0.055px;">Assets</div>
<svg class="b" style="left:83.5px;top:912.0px;" width="20" height="24" viewBox="-10 -12 20 24"><path d="M-3.5 -7.1 L3.5 0 L-3.5 7.1" fill="none" stroke="#717171" stroke-width="2.8" stroke-linecap="round" stroke-linejoin="round"/></svg>
<svg class="b" style="left:110.7px;top:911.9px;" width="29.5" height="24.2" viewBox="0 0 29.5 24.2"><path fill="#878c92" d="M0 3.4 Q0 0 3.4 0 H8.2 Q9.6 0 10.8 1 L12.2 2.1 Q13 2.7 14.2 2.7 H26 Q29.5 2.7 29.5 6.2 V8 H0 Z"/><path fill="#878c92" d="M0 10.2 H29.5 V20.6 Q29.5 24.2 25.9 24.2 H3.6 Q0 24.2 0 20.6 Z"/></svg>
<div class="t " style="left:151.60px;top:912px;font-size:26.5px;color:#3b3b3b;letter-spacing:0.238px;">Preview Content</div>
<div class="t " style="left:485.20px;top:166px;font-size:23px;color:#7a7a7a;font-weight:700;">M</div>
<div class="t " style="left:488.00px;top:474px;font-size:23px;color:#ffffff;font-weight:700;">A</div>
<div class="t " style="left:28.60px;top:979px;font-size:25.5px;color:#b4b4b4;font-weight:700;letter-spacing:0.469px;">Package Dependencies</div>
<svg class="b" style="left:28.1px;top:1019.3px;" width="20" height="24" viewBox="-10 -12 20 24"><path d="M-3.5 -7.1 L3.5 0 L-3.5 7.1" fill="none" stroke="#717171" stroke-width="2.8" stroke-linecap="round" stroke-linejoin="round"/></svg>
<svg class="b" style="left:56.95px;top:1017.9px;" width="26.1" height="28.1" viewBox="0 0 26.1 28.1"><path fill="#ad7b3a" d="M1.0 6.6 L6.45 3.3 L18.0 10.6 L13.06 13.1 Z"/><path fill="#ad7b3a" d="M8.43 2.3 L11.9 0.45 Q12.9 -0.05 13.9 0.45 L25.1 6.6 L20.2 9.15 Z"/><path fill="#ad7b3a" d="M0.15 8.3 L11.9 14.9 V27.95 L1.4 21.9 Q0.15 21.1 0.15 19.6 Z"/><path fill="#ad7b3a" d="M14.2 14.9 L25.96 8.3 V19.6 Q25.96 21.1 24.7 21.9 L14.2 27.95 Z"/></svg>
<div class="t " style="left:95.70px;top:1019px;font-size:26.5px;color:#3b3b3b;letter-spacing:0.071px;">KeychainAccess</div>
<div class="t " style="left:301.80px;top:1019px;font-size:26.5px;color:#6c6c6c;letter-spacing:-0.275px;">4.2.2</div>
<svg class="b" style="left:28.1px;top:1063.3px;" width="20" height="24" viewBox="-10 -12 20 24"><path d="M-3.5 -7.1 L3.5 0 L-3.5 7.1" fill="none" stroke="#717171" stroke-width="2.8" stroke-linecap="round" stroke-linejoin="round"/></svg>
<svg class="b" style="left:56.95px;top:1061.9px;" width="26.1" height="28.1" viewBox="0 0 26.1 28.1"><path fill="#ad7b3a" d="M1.0 6.6 L6.45 3.3 L18.0 10.6 L13.06 13.1 Z"/><path fill="#ad7b3a" d="M8.43 2.3 L11.9 0.45 Q12.9 -0.05 13.9 0.45 L25.1 6.6 L20.2 9.15 Z"/><path fill="#ad7b3a" d="M0.15 8.3 L11.9 14.9 V27.95 L1.4 21.9 Q0.15 21.1 0.15 19.6 Z"/><path fill="#ad7b3a" d="M14.2 14.9 L25.96 8.3 V19.6 Q25.96 21.1 24.7 21.9 L14.2 27.95 Z"/></svg>
<div class="t " style="left:96.20px;top:1063px;font-size:26.5px;color:#3b3b3b;letter-spacing:-0.059px;">Supabase</div>
<div class="t " style="left:224.20px;top:1063px;font-size:26.5px;color:#6c6c6c;letter-spacing:-1.268px;">2.10.1</div>
<svg class="b" style="left:28.1px;top:1107.3px;" width="20" height="24" viewBox="-10 -12 20 24"><path d="M-3.5 -7.1 L3.5 0 L-3.5 7.1" fill="none" stroke="#717171" stroke-width="2.8" stroke-linecap="round" stroke-linejoin="round"/></svg>
<svg class="b" style="left:56.95px;top:1105.9px;" width="26.1" height="28.1" viewBox="0 0 26.1 28.1"><path fill="#ad7b3a" d="M1.0 6.6 L6.45 3.3 L18.0 10.6 L13.06 13.1 Z"/><path fill="#ad7b3a" d="M8.43 2.3 L11.9 0.45 Q12.9 -0.05 13.9 0.45 L25.1 6.6 L20.2 9.15 Z"/><path fill="#ad7b3a" d="M0.15 8.3 L11.9 14.9 V27.95 L1.4 21.9 Q0.15 21.1 0.15 19.6 Z"/><path fill="#ad7b3a" d="M14.2 14.9 L25.96 8.3 V19.6 Q25.96 21.1 24.7 21.9 L14.2 27.95 Z"/></svg>
<div class="t " style="left:96.90px;top:1107px;font-size:26.5px;color:#3b3b3b;letter-spacing:0.791px;">swift-concurrency-extras</div>
<div class="t " style="left:412.00px;top:1107px;font-size:26.5px;color:#6c6c6c;letter-spacing:-1.925px;">1.1.0</div>
<svg class="b" style="left:28.1px;top:1151.3px;" width="20" height="24" viewBox="-10 -12 20 24"><path d="M-3.5 -7.1 L3.5 0 L-3.5 7.1" fill="none" stroke="#717171" stroke-width="2.8" stroke-linecap="round" stroke-linejoin="round"/></svg>
<svg class="b" style="left:56.95px;top:1149.9px;" width="26.1" height="28.1" viewBox="0 0 26.1 28.1"><path fill="#ad7b3a" d="M1.0 6.6 L6.45 3.3 L18.0 10.6 L13.06 13.1 Z"/><path fill="#ad7b3a" d="M8.43 2.3 L11.9 0.45 Q12.9 -0.05 13.9 0.45 L25.1 6.6 L20.2 9.15 Z"/><path fill="#ad7b3a" d="M0.15 8.3 L11.9 14.9 V27.95 L1.4 21.9 Q0.15 21.1 0.15 19.6 Z"/><path fill="#ad7b3a" d="M14.2 14.9 L25.96 8.3 V19.6 Q25.96 21.1 24.7 21.9 L14.2 27.95 Z"/></svg>
<div class="t " style="left:96.90px;top:1151px;font-size:26.5px;color:#3b3b3b;letter-spacing:1.168px;">swift-crypto</div>
<div class="t " style="left:252.60px;top:1151px;font-size:26.5px;color:#6c6c6c;letter-spacing:0.075px;">3.4.0</div>
<svg class="b" style="left:20.5px;top:1846.4px;" width="28" height="28" viewBox="0 0 28 28"><path d="M14 5.1 V23.5 M4.7 14.3 H23.3" stroke="#4a4a4a" stroke-width="2.4" stroke-linecap="round"/></svg>
<div class="b" style="left:56.2px;top:1837.9px;width:477.4px;height:43.8px;background:#e8e8e8;border-radius:11.5px;box-shadow:inset 0 0 0 1.2px #d2d2d2;"></div>
<svg class="b" style="left:64px;top:1846px;" width="54" height="28" viewBox="0 0 54 28"><rect x="2.2" y="2.2" width="49.6" height="23.4" rx="11.7" fill="none" stroke="#5e5e5e" stroke-width="1.9"/><path d="M10.6 9.8 H23.6 M13 14 H21 M15.2 18.2 H18.8" stroke="#5e5e5e" stroke-width="1.8"/><path d="M33 12 L37.8 16.6 L42.6 12" fill="none" stroke="#5e5e5e" stroke-width="2.1" stroke-linecap="round" stroke-linejoin="round"/></svg>
<div class="t " style="left:124.60px;top:1849px;font-size:22.5px;color:#b0b0b0;letter-spacing:0.159px;">Filter</div>
<svg class="b" style="left:461px;top:1846px;" width="28" height="28" viewBox="0 0 28 28"><circle cx="14" cy="14" r="11.8" fill="none" stroke="#5e5e5e" stroke-width="1.8"/><path d="M14.4 6.4 V14.6 H8.8" fill="none" stroke="#5e5e5e" stroke-width="1.8" stroke-linecap="round"/></svg>
<svg class="b" style="left:495px;top:1846px;" width="28" height="28" viewBox="0 0 28 28"><rect x="1.6" y="2" width="24.4" height="24" rx="2" fill="none" stroke="#5e5e5e" stroke-width="1.8"/><path d="M5.6 14 H13 M9.3 10.3 V17.7 M16.6 14 H22.4" stroke="#5e5e5e" stroke-width="1.9" stroke-linecap="round"/></svg>
<div class="ed"><div class="b" style="left:0;top:52.0px;width:2447px;height:44.0px;background:#edf4fe;"></div><div class="b" style="left:12.8px;top:-10px;width:10.4px;height:1426.2px;background:#b4cefb;border:2.1px solid #2d6df2;border-radius:0 0 5.2px 5.2px;box-sizing:border-box;"></div><div class="b" style="left:14.9px;top:52.0px;width:6.2px;height:44.0px;background:#a5c2f9;"></div><div class="b" style="left:105.0px;top:53.7px;width:14.0px;height:1096.2px;background:#e8e8e8;border-radius:7.0px 7.0px 7.0px 7.0px;"></div><div class="b" style="left:105.0px;top:53.7px;width:14.0px;height:42.3px;background:#d8dfe9;border-radius:7.0px 7.0px 0 0;"></div><div class="b" style="left:105.0px;top:405.7px;width:14.0px;height:84.2px;background:#d1d1d1;border-radius:7.0px 7.0px 7.0px 7.0px;"></div><div class="b" style="left:105.0px;top:493.7px;width:14.0px;height:612.2px;background:#d1d1d1;border-radius:7.0px 7.0px 7.0px 7.0px;"></div><div class="b" style="left:105.0px;top:581.7px;width:14.0px;height:480.2px;background:#bebebe;border-radius:7.0px 7.0px 7.0px 7.0px;"></div><div class="b" style="left:105.0px;top:713.7px;width:14.0px;height:172.2px;background:#acacac;border-radius:7.0px 7.0px 7.0px 7.0px;"></div><div class="no" style="top:-36.0px;">8</div><div class="ln" style="top:-36.0px"><span style="color:#9f3c9c"><b>import</b></span> SwiftUI</div><div class="no" style="top:8.0px;">9</div><div class="no" style="top:52.0px;color:#1c1c1c;">10</div><div class="ln" style="top:52.0px"><span style="color:#9f3c9c"><b>struct</b></span> <span style="color:#27628a">TodoItemImage</span>: Transferable, <span style="color:#3f1ea5">Equatable</span> {</div><div class="no" style="top:96.0px;">11</div><div class="no" style="top:140.0px;">12</div><div class="ln" style="top:140.0px"><span style="color:#6d7b89">    // </span><span style="color:#596571"><b>MARK: Stored properties</b></span></div><div class="no" style="top:184.0px;">13</div><div class="ln" style="top:184.0px">    <span style="color:#9f3c9c"><b>let</b></span> <span style="color:#2c77a8">image</span>: <span style="color:#3f1ea5">Image</span></div><div class="no" style="top:228.0px;">14</div><div class="ln" style="top:228.0px">    <span style="color:#9f3c9c"><b>let</b></span> <span style="color:#2c77a8">data</span>: <span style="color:#3f1ea5">Data</span></div><div class="no" style="top:272.0px;">15</div><div class="no" style="top:316.0px;">16</div><div class="ln" style="top:316.0px"><span style="color:#6d7b89">    // </span><span style="color:#596571"><b>MARK: Computed properties</b></span></div><div class="no" style="top:360.0px;">17</div><div class="no" style="top:404.0px;">18</div><div class="ln" style="top:404.0px"><span style="color:#6d7b89">    // Required to conform to Transferable protocol</span></div><div class="no" style="top:448.0px;">19</div><div class="ln" style="top:448.0px"><span style="color:#6d7b89">    // Is invoked when user picks (attempts to import) an image from Photo Library into this app</span></div><div class="no" style="top:492.0px;">20</div><div class="ln" style="top:492.0px">    <span style="color:#9f3c9c"><b>static</b></span> <span style="color:#9f3c9c"><b>var</b></span> <span style="color:#2c77a8">transferRepresentation</span>: <span style="color:#9f3c9c"><b>some</b></span> TransferRepresentation {</div><div class="no" style="top:536.0px;">21</div><div class="no" style="top:580.0px;">22</div><div class="ln" style="top:580.0px">        <span style="color:#9f3c9c"><b>return</b></span> DataRepresentation(importedContentType: .<span style="color:#7b4bb0">image</span>) { importedImageData <span style="color:#9f3c9c"><b>in</b></span></div><div class="no" style="top:624.0px;">23</div><div class="no" style="top:668.0px;">24</div><div class="ln" style="top:668.0px"><span style="color:#6d7b89">            // Attempt to create an instance of TodoItemImage from the imported data</span></div><div class="no" style="top:712.0px;">25</div><div class="ln" style="top:712.0px">            <span style="color:#9f3c9c"><b>guard</b></span> <span style="color:#9f3c9c"><b>let</b></span> image = <span style="color:#335a5e">TodoItemImage</span>(<span style="color:#4a7e84">rawImageData</span>: importedImageData) <span style="color:#9f3c9c"><b>else</b></span> {</div><div class="no" style="top:756.0px;">26</div><div class="ln" style="top:756.0px"><span style="color:#6d7b89">                // If the important did not work, throw an error</span></div><div class="no" style="top:800.0px;">27</div><div class="ln" style="top:800.0px">                <span style="color:#9f3c9c"><b>throw</b></span> <span style="color:#335a5e">TransferError</span>.<span style="color:#4a7e84">importFailed</span></div><div class="no" style="top:844.0px;">28</div><div class="ln" style="top:844.0px">            }</div><div class="no" style="top:888.0px;">29</div><div class="no" style="top:932.0px;">30</div><div class="ln" style="top:932.0px"><span style="color:#6d7b89">            // The import worked, so return the imported image</span></div><div class="no" style="top:976.0px;">31</div><div class="ln" style="top:976.0px">            <span style="color:#9f3c9c"><b>return</b></span> image</div><div class="no" style="top:1020.0px;">32</div><div class="ln" style="top:1020.0px">        }</div><div class="no" style="top:1064.0px;">33</div><div class="ln" style="top:1064.0px">    }</div><div class="no" style="top:1108.0px;">34</div><div class="ln" style="top:1108.0px">}</div><div class="no" style="top:1152.0px;">35</div><div class="no" style="top:1196.0px;">36</div><div class="ln" style="top:1196.0px"><span style="color:#6d7b89">// Extend the structure to add new capabilities</span></div><div class="no" style="top:1240.0px;">37</div><div class="ln" style="top:1240.0px"><span style="color:#9f3c9c"><b>extension</b></span> <span style="color:#27628a">TodoItemImage</span> {<span class="fold"><i style="left:8.9px"></i><i style="left:25.6px"></i><i style="left:42.4px"></i></span>}</div><div class="b" style="left:105.0px;top:1240.2px;width:14.3px;height:43.6px;background:#b2b2b2;"></div><svg class="b" style="left:105.0px;top:1241.0px" width="14.0" height="42.0" viewBox="0 0 14.0 42.0"><path d="M3.9 15.8 L9.4 21 L3.9 26.2" fill="none" stroke="#f1f1f1" stroke-width="2.1" stroke-linecap="round" stroke-linejoin="round"/></svg><div class="no" style="top:1284.0px;">58</div><div class="no" style="top:1328.0px;">59</div><div class="ln" style="top:1328.0px"><span style="color:#6d7b89">// List the possible errors that can occur when importing an image</span></div><div class="no" style="top:1372.0px;">60</div><div class="ln" style="top:1372.0px"><span style="color:#9f3c9c"><b>enum</b></span> <span style="color:#27628a">TransferError</span>: <span style="color:#3f1ea5">Error</span> {<span class="fold"><i style="left:8.9px"></i><i style="left:25.6px"></i><i style="left:42.4px"></i></span>}</div><div class="b" style="left:105.0px;top:1372.2px;width:14.3px;height:43.6px;background:#b2b2b2;"></div><svg class="b" style="left:105.0px;top:1373.0px" width="14.0" height="42.0" viewBox="0 0 14.0 42.0"><path d="M3.9 15.8 L9.4 21 L3.9 26.2" fill="none" stroke="#f1f1f1" stroke-width="2.1" stroke-linecap="round" stroke-linejoin="round"/></svg><div class="no" style="top:1416.0px;">63</div><svg class="b" style="left:565.4px;top:194.6px" width="60" height="60" viewBox="-30 -30 60 60"><circle r="25.6" fill="none" stroke="#ea5a36" stroke-width="1.25"/><circle r="22.6" fill="none" stroke="#ea5a36" stroke-width="1.25"/><text x="0" y="16.9" text-anchor="middle" style="font-family:NanumGothic,Liberation Sans,sans-serif;font-size:45px" stroke="#e8431f" stroke-width="1.2" fill="#e8431f">1</text></svg><svg class="b" style="left:826.8px;top:526.6px" width="60" height="60" viewBox="-30 -30 60 60"><circle r="25.6" fill="none" stroke="#ea5a36" stroke-width="1.25"/><circle r="22.6" fill="none" stroke="#ea5a36" stroke-width="1.25"/><text x="0" y="16.9" text-anchor="middle" style="font-family:NanumGothic,Liberation Sans,sans-serif;font-size:45px" stroke="#e8431f" stroke-width="1.2" fill="#e8431f">2</text></svg><svg class="b" style="left:279.6px;top:750.2px" width="60" height="60" viewBox="-30 -30 60 60"><circle r="25.6" fill="none" stroke="#ea5a36" stroke-width="1.25"/><circle r="22.6" fill="none" stroke="#ea5a36" stroke-width="1.25"/><text x="0" y="16.9" text-anchor="middle" style="font-family:NanumGothic,Liberation Sans,sans-serif;font-size:45px" stroke="#e8431f" stroke-width="1.2" fill="#e8431f">3</text></svg><svg class="b" style="left:279.6px;top:943.8px" width="60" height="60" viewBox="-30 -30 60 60"><circle r="25.6" fill="none" stroke="#ea5a36" stroke-width="1.25"/><circle r="22.6" fill="none" stroke="#ea5a36" stroke-width="1.25"/><text x="0" y="16.9" text-anchor="middle" style="font-family:NanumGothic,Liberation Sans,sans-serif;font-size:45px" stroke="#e8431f" stroke-width="1.2" fill="#e8431f">4</text></svg><div class="b" style="left:2447px;top:0;width:30px;height:1641.8px;background:#fafafa;border-left:1.9px solid #e8e8e8;border-right:1.8px solid #e8e8e8;box-sizing:border-box;"></div><div class="b" style="left:2454.8px;top:201.6px;width:16.3px;height:1069.2px;background:#7f7f7f;border-radius:8.2px;"></div></div>
<svg class="b" style="left:568px;top:1848px;" width="34" height="24" viewBox="0 0 34 24"><path d="M4 3.7 H23.4 Q25.4 3.7 26.4 5.3 L29.8 11 Q30.8 12.75 29.8 14.5 L26.4 20.2 Q25.4 21.8 23.4 21.8 H4 Q0.8 21.8 0.8 18.6 V6.9 Q0.8 3.7 4 3.7 Z" fill="#3478f6"/></svg>
<div class="t " style="left:2773.60px;top:1851px;font-size:23px;color:#7b7b7b;letter-spacing:0.472px;">Line: 10  Col: 3</div>
<div class="b" style="left:2954.2px;top:1849px;width:1.7px;height:24px;background:#e4e4e4;"></div>
<svg class="b" style="left:2971px;top:1846px;" width="30" height="30" viewBox="0 0 30 30"><rect x="3.15" y="3.05" width="23.7" height="23.8" rx="4.8" fill="none" stroke="#7b7b7b" stroke-width="2.1"/><rect x="6" y="18" width="18" height="5.8" rx="2.2" fill="#808080"/></svg>
</div></body></html>
